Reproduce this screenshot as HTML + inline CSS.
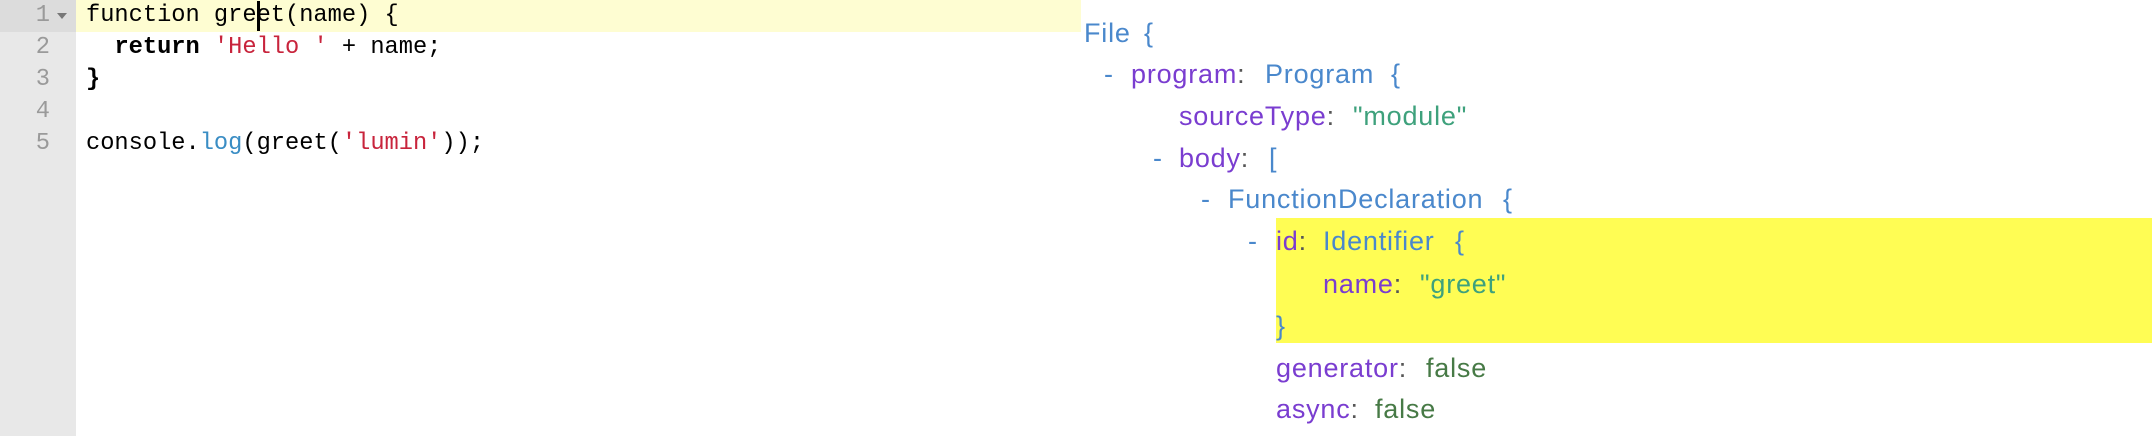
<!DOCTYPE html>
<html><head><meta charset="utf-8"><style>
*{margin:0;padding:0;box-sizing:border-box}
body{width:2156px;height:436px;overflow:hidden;background:#fff;position:relative}
.gut{position:absolute;left:0;top:0;width:76px;height:436px;background:#e8e8e8}
.gact{position:absolute;left:0;top:0;width:76px;height:32px;background:#dcdcdc}
.lact{position:absolute;left:76px;top:0;width:1005px;height:32px;background:#fefdd2}
.ln{position:absolute;left:0;width:50px;text-align:right;font:23.7px "Liberation Mono",monospace;color:#9a9a9a;line-height:32px}
.code{position:absolute;left:86px;font:23.7px "Liberation Mono",monospace;color:#000;line-height:32px;white-space:pre}
.s{color:#c8243c}.b{font-weight:bold}.p{color:#3a8dc4}
.cur{position:absolute;left:257px;top:1px;width:3px;height:30px;background:#000}
.arrow{position:absolute;left:57px;top:13px;width:0;height:0;border-left:5px solid transparent;border-right:5px solid transparent;border-top:6px solid #777}
.hl{position:absolute;left:1276px;top:218px;width:876px;height:125px;background:#fffd54}
.r{position:absolute;font:27px "Liberation Sans",sans-serif;letter-spacing:0.8px;line-height:30px;white-space:pre;color:#4a88cc}
.k{color:#7a3dd0}.c{color:#555}.st{color:#3ea17c}.f{color:#477a46}
</style></head><body>
<div class="gut"></div><div class="gact"></div><div class="lact"></div>
<div class="ln" style="top:0">1</div><div class="arrow"></div>
<div class="ln" style="top:32px">2</div>
<div class="ln" style="top:64px">3</div>
<div class="ln" style="top:96px">4</div>
<div class="ln" style="top:128px">5</div>
<div class="code" style="top:0">function greet(name) {</div>
<div class="cur"></div>
<div class="code" style="top:32px">  <span class="b">return</span> <span class="s">'Hello '</span> + name;</div>
<div class="code" style="top:64px"><span class="b">}</span></div>
<div class="code" style="top:128px">console.<span class="p">log</span>(greet(<span class="s">'lumin'</span>));</div>
<div class="hl"></div>

<div class="r" style="left:1084px;top:18px">File</div>
<div class="r" style="left:1144px;top:18px">{</div>

<div class="r" style="left:1104px;top:59px">-</div>
<div class="r" style="left:1131px;top:59px"><span class="k">program</span><span class="c">:</span></div>
<div class="r" style="left:1265px;top:59px">Program</div>
<div class="r" style="left:1391px;top:59px">{</div>

<div class="r" style="left:1179px;top:101px"><span class="k">sourceType</span><span class="c">:</span></div>
<div class="r st" style="left:1353px;top:101px">"module"</div>

<div class="r" style="left:1153px;top:143px">-</div>
<div class="r" style="left:1179px;top:143px"><span class="k">body</span><span class="c">:</span></div>
<div class="r" style="left:1269px;top:143px">[</div>

<div class="r" style="left:1201px;top:184px">-</div>
<div class="r" style="left:1228px;top:184px">FunctionDeclaration</div>
<div class="r" style="left:1503px;top:184px">{</div>

<div class="r" style="left:1248px;top:226px">-</div>
<div class="r" style="left:1276px;top:226px"><span class="k">id</span><span class="c">:</span></div>
<div class="r" style="left:1323px;top:226px">Identifier</div>
<div class="r" style="left:1455px;top:226px">{</div>

<div class="r" style="left:1323px;top:269px"><span class="k">name</span><span class="c">:</span></div>
<div class="r st" style="left:1420px;top:269px">"greet"</div>

<div class="r" style="left:1276px;top:311px">}</div>

<div class="r" style="left:1276px;top:353px"><span class="k">generator</span><span class="c">:</span></div>
<div class="r f" style="left:1426px;top:353px">false</div>

<div class="r" style="left:1276px;top:394px"><span class="k">async</span><span class="c">:</span></div>
<div class="r f" style="left:1375px;top:394px">false</div>
</body></html>
